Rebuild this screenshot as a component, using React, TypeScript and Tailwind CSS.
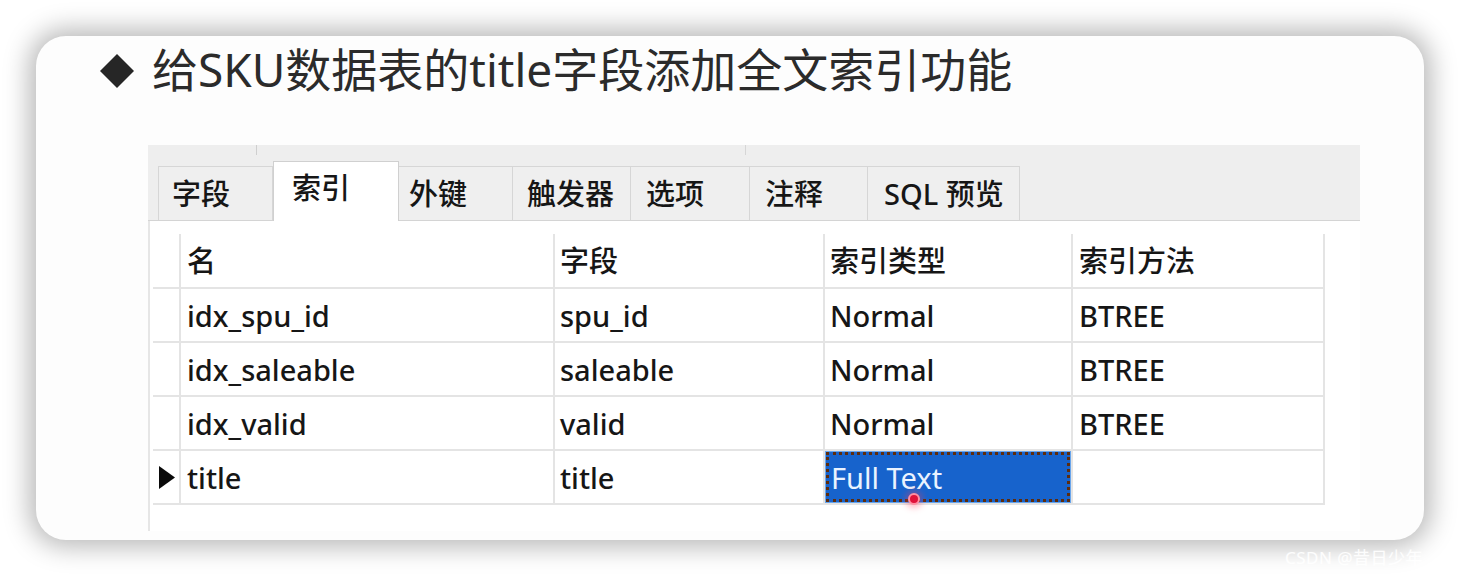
import React from 'react';

const font = { fontFamily: '"Noto Sans", "Noto Sans CJK SC", sans-serif' };

const tabs = [
  { label: '字段', w: 'w-[115px]', pl: 'pl-[13px]' },
  { label: '索引', w: 'w-[126px]', pl: 'pl-[18px]', active: true },
  { label: '外键', w: 'w-[114px]', pl: 'pl-[10px]' },
  { label: '触发器', w: 'w-[118px]', pl: 'pl-[14px]' },
  { label: '选项', w: 'w-[119px]', pl: 'pl-[15px]' },
  { label: '注释', w: 'w-[118px]', pl: 'pl-[15px]' },
  { label: 'SQL 预览', w: 'w-[152px]', pl: 'pl-[16px]' },
];

const rows = [
  { name: 'idx_spu_id', field: 'spu_id', type: 'Normal', method: 'BTREE' },
  { name: 'idx_saleable', field: 'saleable', type: 'Normal', method: 'BTREE' },
  { name: 'idx_valid', field: 'valid', type: 'Normal', method: 'BTREE' },
  { name: 'title', field: 'title', type: 'Full Text', method: '', current: true },
];

const line = 'border-[#e4e4e4]';

const App: React.FC = () => {
  return (
    <div className="relative w-[1460px] h-[576px] bg-white overflow-hidden text-[#161616]" style={font}>
      {/* slide card */}
      <div className="ml-[36px] pt-[36px]">
        <div className="w-[1388px] h-[504px] rounded-[30px] bg-[#fdfdfd] shadow-[0_0_26px_7px_rgba(0,0,0,0.28)]">
          {/* title */}
          <div className="flex items-center h-[56px] pt-[5px] pl-[64px] box-content">
            <svg width="34" height="34" viewBox="0 0 34 34" className="shrink-0 mt-[3px]">
              <polygon points="17,0 34,17 17,34 0,17" fill="#262626" />
            </svg>
            <div className="ml-[18px] text-[46px] leading-none text-[#2b2b2b]">
              给SKU数据表的title字段添加全文索引功能
            </div>
          </div>

          {/* navicat panel */}
          <div className="ml-[112px] mt-[48px] w-[1212px] font-medium">
            {/* tab strip */}
            <div className="bg-[#eeeeee] border-b border-[#d4d4d4]">
              <div className="flex h-[16px]">
                <div className="w-[108px]" />
                <div className="w-px h-[10px] bg-[#cfcfcf]" />
                <div className="w-[488px]" />
                <div className="w-px h-[10px] bg-[#d6d6d6]" />
              </div>
              <div className="flex items-end h-[59px] pl-[10px]">
                {tabs.map(t => (
                  <div
                    key={t.label}
                    className={
                      t.active
                        ? `${t.w} ${t.pl} h-[60px] -mb-px bg-white border-t border-x border-[#d0d0d0] flex items-start pt-[8px] text-[29px] leading-[36px]`
                        : `${t.w} ${t.pl} h-[54px] bg-[#efefef] border-t border-r border-[#d6d6d6] first:border-l flex items-center text-[29px] leading-[36px]`
                    }
                  >
                    {t.label}
                  </div>
                ))}
              </div>
            </div>

            {/* grid */}
            <div className="h-[310px] border-l-2 border-[#e6e6e6] pl-[3px] pt-[13px] bg-white">
              <div className="w-[1172px] text-[29px] leading-none">
                <div className={`flex h-[55px] border-b-2 ${line}`}>
                  <div className={`w-[28px] border-r-2 ${line}`} />
                  <div className={`w-[374px] border-r-2 ${line} pl-[6px] flex items-center`}>名</div>
                  <div className={`w-[270px] border-r-2 ${line} pl-[5px] flex items-center`}>字段</div>
                  <div className={`w-[248px] border-r-2 ${line} pl-[5px] flex items-center`}>索引类型</div>
                  <div className={`w-[252px] border-r-2 ${line} pl-[6px] flex items-center`}>索引方法</div>
                </div>
                {rows.map(r => (
                  <div key={r.name} className={`flex h-[54px] border-b-2 ${line}`}>
                    <div className={`w-[28px] border-r-2 ${line} flex items-center pl-[6px]`}>
                      {r.current && (
                        <svg width="16" height="23" viewBox="0 0 16 23">
                          <polygon points="0,0 16,11.5 0,23" fill="#0a0a0a" />
                        </svg>
                      )}
                    </div>
                    <div className={`w-[374px] border-r-2 ${line} pl-[6px] flex items-center`}>{r.name}</div>
                    <div className={`w-[270px] border-r-2 ${line} pl-[5px] flex items-center`}>{r.field}</div>
                    <div className={`w-[248px] border-r-2 ${line} flex items-center`}>
                      {r.current ? (
                        <div className="relative w-full h-full border border-[#6aa6ec] bg-[#1763cc]">
                          <div className="w-full h-full border-[3px] border-dotted border-[#5e2c0c] flex items-center pl-[2px] text-[#eaf3ff] font-normal">
                            {r.type}
                          </div>
                          <div className="absolute left-[82px] top-[41px] w-[12px] h-[12px] rounded-full bg-[#e0123a] border-2 border-[#ff8fa3] shadow-[0_0_6px_3px_rgba(255,60,90,0.35)]" />
                        </div>
                      ) : (
                        <span className="pl-[5px]">{r.type}</span>
                      )}
                    </div>
                    <div className={`w-[252px] border-r-2 ${line} pl-[6px] flex items-center`}>{r.method}</div>
                  </div>
                ))}
              </div>
            </div>
          </div>
        </div>
      </div>

      {/* watermark */}
      <div className="absolute left-[1285px] top-[545px] text-[17px] text-white/90 tracking-[0.5px]" style={font}>
        CSDN @昔日少年
      </div>
    </div>
  );
};

export default App;
